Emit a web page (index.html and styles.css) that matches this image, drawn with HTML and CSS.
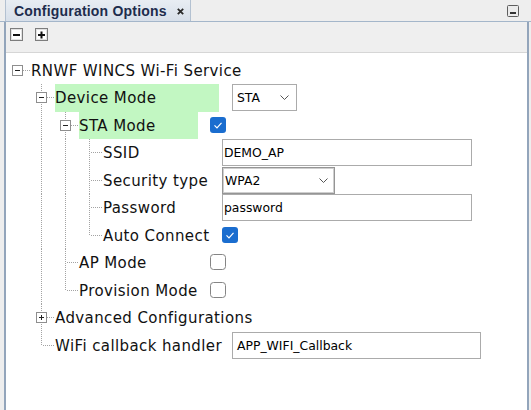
FILE: index.html
```html
<!DOCTYPE html>
<html>
<head>
<meta charset="utf-8">
<link rel="stylesheet" href="styles.css">
</head>
<body>
<div class="header">
  <div class="tab">
    <span class="tab-title">Configuration Options</span>
    <svg class="tab-close" width="7" height="7" viewBox="0 0 7 7"><path d="M0.8 0.8 L6.2 6.2 M6.2 0.8 L0.8 6.2" stroke="#2a2a2a" stroke-width="1.8"/></svg>
  </div>
  <svg class="minimize" width="12" height="12" viewBox="0 0 12 12"><rect x="0.5" y="0.5" width="11" height="11" rx="1" fill="#ebebeb" stroke="#5e5e5e"/><rect x="3" y="7" width="6" height="2" fill="#333"/></svg>
</div>
<div class="panel">
  <div class="toolbar">
    <svg class="tbtn" width="13" height="13" viewBox="0 0 13 13"><rect x="0.5" y="0.5" width="12" height="12" fill="#fff" stroke="#7d7d7d"/><rect x="1.5" y="1.5" width="10" height="10" fill="none" stroke="#e2e2e2"/><rect x="3" y="6" width="7" height="2" fill="#111"/></svg>
    <svg class="tbtn" width="13" height="13" viewBox="0 0 13 13"><rect x="0.5" y="0.5" width="12" height="12" fill="#fff" stroke="#7d7d7d"/><rect x="1.5" y="1.5" width="10" height="10" fill="none" stroke="#e2e2e2"/><rect x="3" y="6" width="7" height="2" fill="#111"/><rect x="5.5" y="3.5" width="2" height="7" fill="#111"/></svg>
  </div>
  <div class="tree">
    <div class="row">
      <div class="g hd hroot"><svg width="11" height="11" viewBox="0 0 11 11"><rect x="0.5" y="0.5" width="10" height="10" fill="#fff" stroke="#8e8e8e"/><rect x="3" y="5" width="5" height="1" fill="#222"/></svg></div>
      <div class="lbl">RNWF WINCS Wi-Fi Service</div>
    </div>
    <div class="row">
      <div class="g"></div>
      <div class="g hd hcont"><svg width="11" height="11" viewBox="0 0 11 11"><rect x="0.5" y="0.5" width="10" height="10" fill="#fff" stroke="#8e8e8e"/><rect x="3" y="5" width="5" height="1" fill="#222"/></svg></div>
      <div class="lbl w1 sel">Device Mode</div>
      <div class="combo combo-mode"><span>STA</span><svg width="9" height="5" viewBox="0 0 9 5"><polyline points="0.5,0.5 4.5,4.5 8.5,0.5" fill="none" stroke="#555"/></svg></div>
    </div>
    <div class="row">
      <div class="g"></div>
      <div class="g v"></div>
      <div class="g hd hcont"><svg width="11" height="11" viewBox="0 0 11 11"><rect x="0.5" y="0.5" width="10" height="10" fill="#fff" stroke="#8e8e8e"/><rect x="3" y="5" width="5" height="1" fill="#222"/></svg></div>
      <div class="lbl w2 sel">STA Mode</div>
      <svg class="cb" width="16" height="16" viewBox="0 0 16 16"><rect width="16" height="16" rx="3" fill="#1a6dcf"/><path d="M4.5 8.3 L7 10.8 L11.5 5.8" fill="none" stroke="#fff" stroke-width="1.2"/></svg>
    </div>
    <div class="row">
      <div class="g"></div>
      <div class="g v"></div>
      <div class="g v"></div>
      <div class="g t"></div>
      <div class="lbl w3">SSID</div>
      <div class="field field-ssid">DEMO_AP</div>
    </div>
    <div class="row">
      <div class="g"></div>
      <div class="g v"></div>
      <div class="g v"></div>
      <div class="g t"></div>
      <div class="lbl w3">Security type</div>
      <div class="combo combo-sec"><span>WPA2</span><svg width="9" height="5" viewBox="0 0 9 5"><polyline points="0.5,0.5 4.5,4.5 8.5,0.5" fill="none" stroke="#555"/></svg></div>
    </div>
    <div class="row">
      <div class="g"></div>
      <div class="g v"></div>
      <div class="g v"></div>
      <div class="g t"></div>
      <div class="lbl w3">Password</div>
      <div class="field field-ssid">password</div>
    </div>
    <div class="row">
      <div class="g"></div>
      <div class="g v"></div>
      <div class="g v"></div>
      <div class="g l"></div>
      <div class="lbl w3">Auto Connect</div>
      <svg class="cb" width="16" height="16" viewBox="0 0 16 16"><rect width="16" height="16" rx="3" fill="#1a6dcf"/><path d="M4.5 8.3 L7 10.8 L11.5 5.8" fill="none" stroke="#fff" stroke-width="1.2"/></svg>
    </div>
    <div class="row">
      <div class="g"></div>
      <div class="g v"></div>
      <div class="g t"></div>
      <div class="lbl w2">AP Mode</div>
      <svg class="cb" width="16" height="16" viewBox="0 0 16 16"><rect x="0.5" y="0.5" width="15" height="15" rx="3" fill="#fff" stroke="#858585"/></svg>
    </div>
    <div class="row">
      <div class="g"></div>
      <div class="g v"></div>
      <div class="g l"></div>
      <div class="lbl w2">Provision Mode</div>
      <svg class="cb" width="16" height="16" viewBox="0 0 16 16"><rect x="0.5" y="0.5" width="15" height="15" rx="3" fill="#fff" stroke="#858585"/></svg>
    </div>
    <div class="row">
      <div class="g"></div>
      <div class="g hd hcont"><svg width="11" height="11" viewBox="0 0 11 11"><rect x="0.5" y="0.5" width="10" height="10" fill="#fff" stroke="#8e8e8e"/><rect x="3" y="5" width="5" height="1" fill="#222"/><rect x="5" y="3" width="1" height="5" fill="#222"/></svg></div>
      <div class="lbl">Advanced Configurations</div>
    </div>
    <div class="row">
      <div class="g"></div>
      <div class="g l"></div>
      <div class="lbl w1">WiFi callback handler</div>
      <div class="field field-cb">APP_WIFI_Callback</div>
    </div>
  </div>
</div>
</body>
</html>
```
FILE: styles.css
```css
* { box-sizing: border-box; }
html, body { margin: 0; padding: 0; }
body {
  width: 531px;
  height: 410px;
  overflow: hidden;
  background: #eeeeee;
  font-family: "DejaVu Sans", sans-serif;
}

.header {
  display: flex;
  height: 22px;
  border-bottom: 1px solid #a4b6ca;
  background: #eeeeee;
}
.tab {
  margin-left: 5px;
  width: 186px;
  display: flex;
  align-items: center;
  padding-left: 8px;
  background: linear-gradient(#e8edf3, #d7dfe9);
  border-left: 1px solid #b3c1d1;
  border-right: 1px solid #b3c1d1;
}
.tab-title {
  font: bold 14px "Liberation Sans", Arial, sans-serif;
  letter-spacing: 0.2px;
  color: #1d2c4c;
  white-space: nowrap;
}
.tab-close { margin-left: 10px; margin-top: 1px; }
.minimize { margin-left: auto; margin-right: 12px; margin-top: 5px; }

.panel {
  margin-left: 4px;
  width: 525px;
  height: 388px;
  border-left: 2px solid #93a5bb;
  border-right: 2px solid #93a5bb;
  background: #ffffff;
}
.toolbar {
  height: 31px;
  background: #efefef;
  border-bottom: 1px solid #d6d6d6;
  display: flex;
  align-items: flex-start;
  gap: 12px;
  padding: 6px 0 0 4px;
}

.tree { padding: 4px 0 0 1px; }
.row { display: flex; height: 28px; }
.row:nth-child(odd) { height: 27px; }

.g { width: 24px; flex: none; height: 100%; }
.v {
  background: repeating-linear-gradient(to bottom, #a3a3a3 0 1px, transparent 1px 2px) 10px 0 / 1px 100% no-repeat;
}
.t {
  background:
    repeating-linear-gradient(to right, #a3a3a3 0 1px, transparent 1px 2px) 12px 13px / 11px 1px no-repeat,
    repeating-linear-gradient(to bottom, #a3a3a3 0 1px, transparent 1px 2px) 10px 0 / 1px 100% no-repeat;
}
.l {
  background:
    repeating-linear-gradient(to right, #a3a3a3 0 1px, transparent 1px 2px) 12px 13px / 11px 1px no-repeat,
    repeating-linear-gradient(to bottom, #a3a3a3 0 1px, transparent 1px 2px) 10px 0 / 1px 14px no-repeat;
}
.hd { display: flex; align-items: flex-start; }
.hd svg { margin: 8px 0 0 5px; }
.hroot {
  background: repeating-linear-gradient(to right, #a3a3a3 0 1px, transparent 1px 2px) 16px 13px / 8px 1px no-repeat;
}
.hcont {
  background:
    repeating-linear-gradient(to right, #a3a3a3 0 1px, transparent 1px 2px) 16px 13px / 8px 1px no-repeat,
    repeating-linear-gradient(to bottom, #a3a3a3 0 1px, transparent 1px 2px) 10px 0 / 1px 100% no-repeat;
}

.lbl {
  flex: none;
  height: 100%;
  display: flex;
  align-items: center;
  font-size: 15px;
  letter-spacing: 0.4px;
  color: #111;
  white-space: nowrap;
}
.w1 { width: 164px; margin-right: 13px; }
.w2 { width: 119px; margin-right: 12px; }
.w3 { width: 107px; margin-right: 12px; }
.sel { background: #c2f7c2; }

.cb { flex: none; margin-top: 5px; }

.combo, .field {
  flex: none;
  height: 27px;
  display: flex;
  align-items: center;
  background: #fff;
  font-size: 12.4px;
  color: #000;
  white-space: nowrap;
}
.combo { justify-content: space-between; }
.combo-mode {
  width: 65px;
  border: 1px solid #ababab;
  padding: 0 7px 0 4px;
}
.combo-sec {
  width: 113px;
  border: 1px solid #959595;
  box-shadow: inset 0 0 0 1px #cfcfcf;
  padding: 0 6px 0 2px;
}
.field { border: 1px solid #ababab; }
.field-ssid { width: 250px; padding-left: 1px; }
.field-cb { width: 249px; padding-left: 4px; }
```
